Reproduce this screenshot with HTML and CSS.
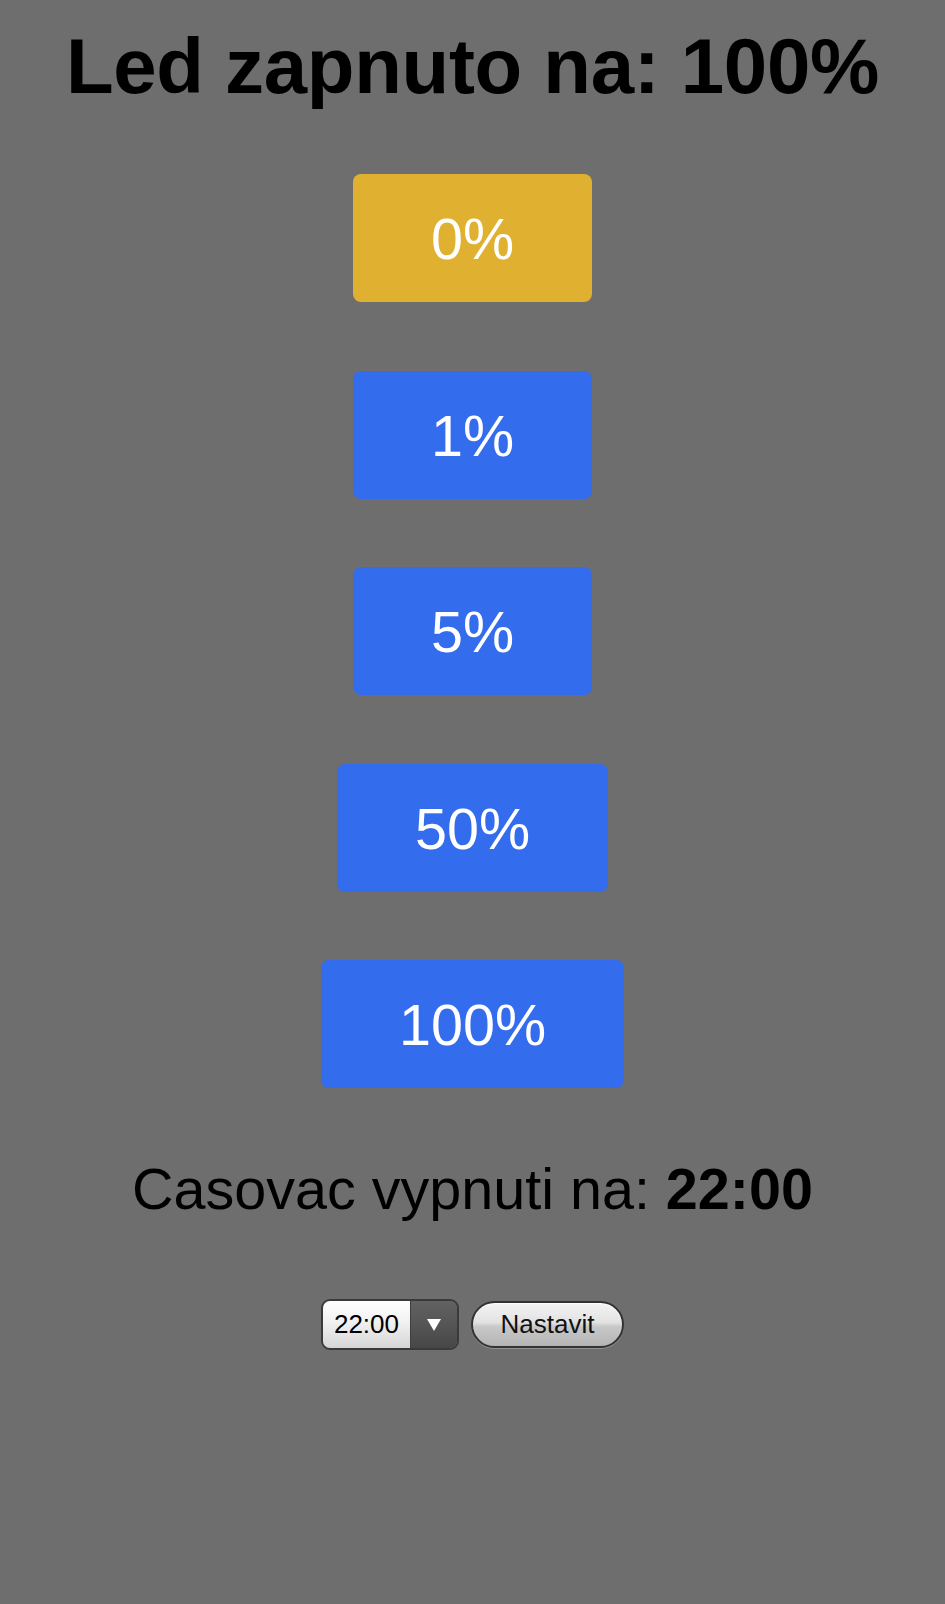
FILE: index.html
```html
<!DOCTYPE html>
<html lang="cs">
<head>
<meta charset="utf-8">
<title>Led</title>
<link rel="stylesheet" href="styles.css">
</head>
<body>
<main class="page">
  <h1 class="title">Led zapnuto na: 100%</h1>
  <div class="levels">
    <button class="btn btn-active">0%</button>
    <button class="btn">1%</button>
    <button class="btn">5%</button>
    <button class="btn">50%</button>
    <button class="btn">100%</button>
  </div>
  <p class="caption">Casovac vypnuti na: <b>22:00</b></p>
  <form class="timer">
    <div class="select">
      <span class="select-value">22:00</span>
      <span class="select-arrow"><svg width="16" height="14" viewBox="0 0 16 14"><path d="M1 1 L15 1 L8 13 Z" fill="#fff"/></svg></span>
    </div>
    <button type="button" class="submit">Nastavit</button>
  </form>
</main>
</body>
</html>
```
FILE: styles.css
```css
html, body {
  margin: 0;
  padding: 0;
  background: #6e6e6e;
}
body {
  font-family: "Liberation Sans", Helvetica, Arial, sans-serif;
  color: #000;
}
.page {
  display: flex;
  flex-direction: column;
  align-items: center;
  padding-top: 21px;
}
.title {
  margin: 0;
  font-size: 78px;
  line-height: 90px;
  font-weight: bold;
  letter-spacing: -0.3px;
}
.levels {
  display: flex;
  flex-direction: column;
  align-items: center;
  gap: 68.5px;
  margin-top: 63px;
}
.btn {
  font-family: "Liberation Sans", Helvetica, Arial, sans-serif;
  font-size: 57.5px;
  line-height: 66px;
  padding: 32px 78px 30px;
  border: none;
  border-radius: 8px;
  background: #336cec;
  color: #fff;
}
.btn-active {
  background: #e0b031;
}
.caption {
  margin: 68px 0 0;
  font-size: 57.5px;
  line-height: 66px;
}
.timer {
  display: flex;
  align-items: center;
  gap: 12px;
  margin-top: 77px;
}
.select {
  display: flex;
  width: 138px;
  height: 51px;
  box-sizing: border-box;
  border: 2px solid #3a3a3a;
  border-radius: 9px;
  overflow: hidden;
}
.select-value {
  width: 87px;
  display: flex;
  align-items: center;
  justify-content: center;
  font-size: 26px;
  background: linear-gradient(#ffffff, #f1f1f1 45%, #d6d6d6);
}
.select-arrow {
  flex: 1;
  display: flex;
  align-items: center;
  justify-content: center;
  border-left: 1px solid #3f3f3f;
  background: linear-gradient(#626262, #555555 50%, #474747);
}
.submit {
  width: 153px;
  height: 47px;
  box-sizing: border-box;
  font-family: "Liberation Sans", Helvetica, Arial, sans-serif;
  font-size: 26px;
  color: #111;
  border: 2px solid #333;
  border-radius: 24px;
  padding: 0;
  background: linear-gradient(#f4f4f4, #e2e2e2 45%, #c8c8c8 55%, #b4b4b4);
  box-shadow: inset 0 1px 1px rgba(255,255,255,0.9), 0 1px 0 rgba(255,255,255,0.25);
}
```
